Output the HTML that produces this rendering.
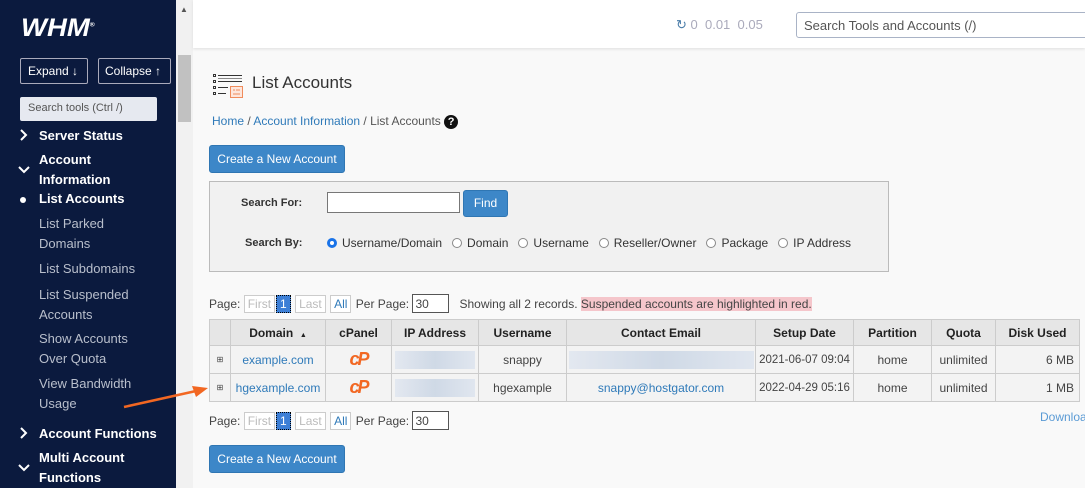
<!DOCTYPE html>
<html><head><style>
*{box-sizing:border-box;margin:0;padding:0}
body{width:1085px;height:488px;overflow:hidden;background:#f9f9f9;font-family:"Liberation Sans",sans-serif;position:relative;font-size:12px;color:#333}
.sb{position:absolute;left:0;top:0;width:176px;height:488px;background:#0b1a3e;color:#fff}
.scr{position:absolute;left:176px;top:0;width:17px;height:488px;background:#f1f1f1}
.thumb{position:absolute;left:178px;top:55px;width:13px;height:67px;background:#c1c1c1}
.top{position:absolute;left:193px;top:0;width:892px;height:48px;background:#fff;box-shadow:0 1px 3px #ddd}
.a{position:absolute;white-space:nowrap}
.nav{position:absolute;left:39px;font-size:13px;line-height:19.5px}
.b{font-weight:bold;color:#fff}
.g{color:#b9bfcc}
.chev{position:absolute;left:18px}
.btn{position:absolute;background:#3d87c8;border:1px solid #2f76b3;border-radius:3px;color:#fff;font-size:12px;text-align:center}
a,.lk{color:#2f7ab9}
table{position:absolute;left:209px;top:319px;border-collapse:collapse;font-size:12px;table-layout:fixed;width:871px}
td,th{border:1px solid #ccc;height:28px;text-align:center;padding:0 5px;white-space:nowrap;overflow:hidden}
th{background:#e6e6e6;font-weight:bold;color:#222;height:26px}
td{background:#f3f3f3;color:#444}
.blur{display:inline-block;height:18px;background:linear-gradient(90deg,#e3e8f0,#cfd9e6,#e0e6ef);vertical-align:middle}
.pg{position:absolute;font-size:12px;color:#444}
.pb{display:inline-block;border:1px solid #ccc;background:#fff;color:#bbb;padding:1px 3px;margin-right:1px}
.cp{color:#f26722;font-weight:bold;font-style:italic;font-size:18px;letter-spacing:-2px}
.rad{display:inline-block;width:10px;height:10px;border:1px solid #888;border-radius:50%;vertical-align:-1px;margin:0 5px 0 10px;background:#fff}
.dt{padding:0;font-size:11.5px}
</style></head><body>
<div class="sb">
 <div class="a" style="left:21px;top:14px;font-size:25px;font-weight:900;font-style:italic;letter-spacing:0px;transform:scaleX(1.1);transform-origin:left">WHM<sup style="font-size:6px">®</sup></div>
 <div class="a" style="left:20px;top:58px;width:68px;height:26px;border:1px solid #aab;border-radius:2px;font-size:12px;padding:5px 0 0 7px">Expand ↓</div>
 <div class="a" style="left:98px;top:58px;width:73px;height:26px;border:1px solid #aab;border-radius:2px;font-size:12px;padding:5px 0 0 6px">Collapse ↑</div>
 <div class="a" style="left:20px;top:97px;width:137px;height:24px;background:#e6e9f0;border-radius:2px;color:#555;font-size:11px;padding:5px 0 0 8px">Search tools (Ctrl /)</div>
 <svg class="chev" style="top:129px" width="10" height="12"><path d="M3 1l5 5-5 5" stroke="#fff" stroke-width="2" fill="none"/></svg><div class="nav b" style="top:126px">Server Status</div>
 <svg class="chev" style="top:165px" width="12" height="10"><path d="M1 2l5 5 5-5" stroke="#fff" stroke-width="2" fill="none"/></svg><div class="nav b" style="top:150px">Account<br>Information</div>
 <div class="a" style="left:20px;top:197px;width:6px;height:6px;border-radius:50%;background:#fff"></div><div class="nav b" style="top:189px">List Accounts</div>
 <div class="nav g" style="top:214px">List Parked<br>Domains</div>
 <div class="nav g" style="top:259px">List Subdomains</div>
 <div class="nav g" style="top:285px">List Suspended<br>Accounts</div>
 <div class="nav g" style="top:329px">Show Accounts<br>Over Quota</div>
 <div class="nav g" style="top:374px">View Bandwidth<br>Usage</div>
 <svg class="chev" style="top:427px" width="10" height="12"><path d="M3 1l5 5-5 5" stroke="#fff" stroke-width="2" fill="none"/></svg><div class="nav b" style="top:424px">Account Functions</div>
 <svg class="chev" style="top:463px" width="12" height="10"><path d="M1 2l5 5 5-5" stroke="#fff" stroke-width="2" fill="none"/></svg><div class="nav b" style="top:448px">Multi Account<br>Functions</div>
</div>
<div class="scr"></div><div class="thumb"></div>
<div class="a" style="left:180px;top:5px;font-size:8px;color:#555">▲</div>
<div class="top"></div>
<div class="a" style="left:676px;top:17px;color:#aab;font-size:13px"><span style="color:#4a7ca8">↻</span> 0 &nbsp;0.01 &nbsp;0.05</div>
<div class="a" style="left:796px;top:12px;width:300px;height:26px;border:1px solid #a9b3c6;border-radius:3px;background:#fff;font-size:13px;color:#555;padding:5px 0 0 7px">Search Tools and Accounts (/)</div>
<svg class="a" style="left:212px;top:72px" width="32" height="28"><g fill="none" stroke="#333" stroke-width="1"><rect x="1.5" y="2.5" width="2" height="2"/><rect x="1.5" y="8.5" width="2" height="2"/><rect x="1.5" y="14.5" width="2" height="2"/><rect x="1.5" y="20.5" width="2" height="2"/><path d="M6 3.5h24M6 9.5h24M6 15.5h10M6 21.5h8"/></g><path d="M6 6.5h24" stroke="#888"/><rect x="18.5" y="14.5" width="12" height="11" fill="#fde6dc" stroke="#f08c5c"/><path d="M21 18h2M24 18h4M21 22h7" stroke="#f08c5c"/></svg>
<div class="a" style="left:252px;top:73px;font-size:17px;color:#333">List Accounts</div>
<div class="a" style="left:212px;top:114px;font-size:12px;color:#555"><span class="lk">Home</span> / <span class="lk">Account Information</span> / List Accounts <span style="display:inline-block;width:14px;height:14px;border-radius:50%;background:#111;color:#fff;text-align:center;font-weight:bold;font-size:11px;line-height:14px">?</span></div>
<div class="btn" style="left:209px;top:145px;width:136px;height:28px;line-height:26px">Create a New Account</div>
<div class="a" style="left:209px;top:181px;width:680px;height:91px;background:#f1f1f1;border:1px solid #bbb"></div>
<div class="a" style="left:241px;top:197px;font-weight:bold;font-size:11px">Search For:</div>
<div class="a" style="left:327px;top:192px;width:133px;height:21px;border:1px solid #777;background:#fff"></div>
<div class="btn" style="left:463px;top:190px;width:45px;height:27px;line-height:25px">Find</div>
<div class="a" style="left:245px;top:237px;font-weight:bold;font-size:11px">Search By:</div>
<div class="a" style="left:317px;top:236px;font-size:12px;color:#333"><span class="rad" style="border:3px solid #1a73e8"></span>Username/Domain<span class="rad"></span>Domain<span class="rad"></span>Username<span class="rad"></span>Reseller/Owner<span class="rad"></span>Package<span class="rad"></span>IP Address</div>
<div class="pg" style="left:209px;top:294px">Page: <span class="pb">First</span><span class="pb" style="background:#3d7fd6;color:#fff;border:1px dotted #000">1</span> <span class="pb">Last</span> <span class="pb" style="color:#2f7ab9">All</span> Per Page: <span style="display:inline-block;width:37px;height:19px;border:1px solid #555;background:#fff;padding:2px">30</span> &nbsp; Showing all 2 records. <span style="background:#f5c6cb">Suspended accounts are highlighted in red.</span></div>
<table>
<colgroup><col style="width:21px"><col style="width:95px"><col style="width:66px"><col style="width:87px"><col style="width:88px"><col style="width:189px"><col style="width:98px"><col style="width:78px"><col style="width:64px"><col style="width:84px"><col></colgroup>
<tr><th></th><th>Domain &nbsp;<span style="font-size:7px">▲</span></th><th>cPanel</th><th>IP Address</th><th>Username</th><th>Contact Email</th><th>Setup Date</th><th>Partition</th><th>Quota</th><th>Disk Used</th><th></th></tr>
<tr><td style="font-size:8px;padding:0">⊞</td><td><a>example.com</a></td><td><span class="cp">cP</span></td><td style="padding:0"><span class="blur" style="width:80px"></span></td><td>snappy</td><td style="padding:0"><span class="blur" style="width:185px"></span></td><td class="dt">2021-06-07 09:04</td><td>home</td><td>unlimited</td><td style="text-align:right">6 MB</td><td></td></tr>
<tr><td style="font-size:8px;padding:0">⊞</td><td style="padding:0"><a>hgexample.com</a></td><td><span class="cp">cP</span></td><td style="padding:0"><span class="blur" style="width:80px"></span></td><td>hgexample</td><td><a>snappy@hostgator.com</a></td><td class="dt">2022-04-29 05:16</td><td>home</td><td>unlimited</td><td style="text-align:right">1 MB</td><td></td></tr>
</table>
<div class="pg" style="left:209px;top:411px">Page: <span class="pb">First</span><span class="pb" style="background:#3d7fd6;color:#fff;border:1px dotted #000">1</span> <span class="pb">Last</span> <span class="pb" style="color:#2f7ab9">All</span> Per Page: <span style="display:inline-block;width:37px;height:19px;border:1px solid #555;background:#fff;padding:2px">30</span></div>
<div class="a lk" style="left:1040px;top:410px;font-size:12px;color:#5b9bd5">Download</div>
<div class="btn" style="left:209px;top:445px;width:136px;height:28px;line-height:26px">Create a New Account</div>
<svg class="a" style="left:120px;top:378px" width="95" height="35"><path d="M4 29L76 13" stroke="#f26722" stroke-width="2.5"/><path d="M88 10L72 8L76 19Z" fill="#f26722"/></svg>
</body></html>
